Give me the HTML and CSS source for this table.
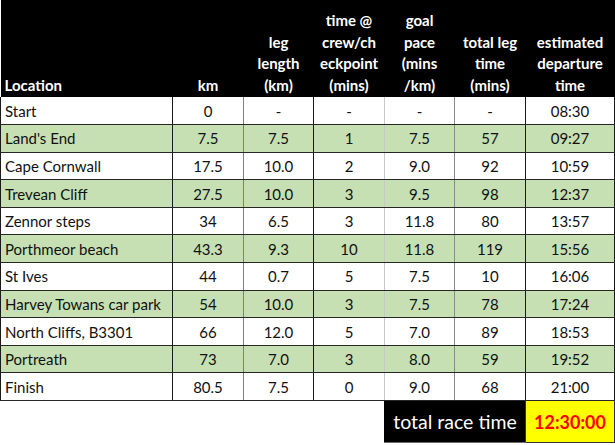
FILE: index.html
```html
<!DOCTYPE html>
<html>
<head>
<meta charset="utf-8">
<link rel="stylesheet" href="styles.css">
</head>
<body>
<table class="sched">
<colgroup>
<col class="w-loc"><col class="w-km"><col class="w-leg"><col class="w-tm"><col class="w-pace"><col class="w-tot"><col class="w-dep">
</colgroup>
<thead>
<tr class="head">
<th class="loc">Location</th>
<th>km</th>
<th>leg<br>length<br>(km)</th>
<th>time @<br>crew/ch<br>eckpoint<br>(mins)</th>
<th>goal<br>pace<br>(mins<br>/km)</th>
<th>total leg<br>time<br>(mins)</th>
<th>estimated<br>departure<br>time</th>
</tr>
</thead>
<tbody>
<tr class="row"><td class="c1">Start</td><td class="c2">0</td><td class="c3">-</td><td class="c4">-</td><td class="c5">-</td><td class="c6">-</td><td class="c7">08:30</td></tr>
<tr class="row g"><td class="c1">Land's End</td><td class="c2">7.5</td><td class="c3">7.5</td><td class="c4">1</td><td class="c5">7.5</td><td class="c6">57</td><td class="c7">09:27</td></tr>
<tr class="row"><td class="c1">Cape Cornwall</td><td class="c2">17.5</td><td class="c3">10.0</td><td class="c4">2</td><td class="c5">9.0</td><td class="c6">92</td><td class="c7">10:59</td></tr>
<tr class="row g"><td class="c1">Trevean Cliff</td><td class="c2">27.5</td><td class="c3">10.0</td><td class="c4">3</td><td class="c5">9.5</td><td class="c6">98</td><td class="c7">12:37</td></tr>
<tr class="row"><td class="c1">Zennor steps</td><td class="c2">34</td><td class="c3">6.5</td><td class="c4">3</td><td class="c5">11.8</td><td class="c6">80</td><td class="c7">13:57</td></tr>
<tr class="row g"><td class="c1">Porthmeor beach</td><td class="c2">43.3</td><td class="c3">9.3</td><td class="c4">10</td><td class="c5">11.8</td><td class="c6">119</td><td class="c7">15:56</td></tr>
<tr class="row"><td class="c1">St Ives</td><td class="c2">44</td><td class="c3">0.7</td><td class="c4">5</td><td class="c5">7.5</td><td class="c6">10</td><td class="c7">16:06</td></tr>
<tr class="row g"><td class="c1">Harvey Towans car park</td><td class="c2">54</td><td class="c3">10.0</td><td class="c4">3</td><td class="c5">7.5</td><td class="c6">78</td><td class="c7">17:24</td></tr>
<tr class="row"><td class="c1">North Cliffs, B3301</td><td class="c2">66</td><td class="c3">12.0</td><td class="c4">5</td><td class="c5">7.0</td><td class="c6">89</td><td class="c7">18:53</td></tr>
<tr class="row g"><td class="c1">Portreath</td><td class="c2">73</td><td class="c3">7.0</td><td class="c4">3</td><td class="c5">8.0</td><td class="c6">59</td><td class="c7">19:52</td></tr>
<tr class="row"><td class="c1">Finish</td><td class="c2">80.5</td><td class="c3">7.5</td><td class="c4">0</td><td class="c5">9.0</td><td class="c6">68</td><td class="c7">21:00</td></tr>
<tr class="foot"><td class="blank" colspan="4"></td><td class="total" colspan="2">total race time</td><td class="race">12:30:00</td></tr>
</tbody>
</table>
</body>
</html>
```

FILE: styles.css
```css
html, body {
  margin: 0;
  padding: 0;
  background: #ffffff;
}

body {
  font-family: Lato, "Liberation Sans", sans-serif;
  font-size: 15px;
  color: #111111;
}

.sched {
  border-collapse: collapse;
  table-layout: fixed;
  width: 614px;
}

.w-loc { width: 172px; }
.w-km { width: 71px; }
.w-leg { width: 70px; }
.w-tm { width: 71px; }
.w-pace { width: 70px; }
.w-tot { width: 71px; }
.w-dep { width: 89px; }

.head {
  height: 97px;
  background: #000000;
}

.head th {
  color: #ffffff;
  font-weight: 700;
  font-size: 15px;
  line-height: 21.5px;
  vertical-align: bottom;
  text-align: center;
  padding: 0 0 1px 0;
  border: none;
}

.head th.loc {
  text-align: left;
  padding-left: 4px;
}

.row {
  height: 27.6px;
  background: #ffffff;
}

.row.g {
  background: #c6e0b4;
}

.row td {
  padding: 0;
  text-align: center;
  vertical-align: middle;
  line-height: 18px;
  border-bottom: 1px solid #262626;
  white-space: nowrap;
}

.row td.c1 {
  text-align: left;
  padding-left: 4px;
  border-left: 1px solid #1a1a1a;
  border-right: 1px solid #1a1a1a;
}

.row td.c2 { border-right: 1px solid #7f7f7f; }
.row td.c3 { border-right: 1px solid #1a1a1a; }
.row td.c4 { border-right: 1px solid #c8c8c8; }
.row td.c5 { border-right: 1px solid #8a8a8a; }
.row td.c6 { border-right: 1px solid #1a1a1a; }
.row td.c7 { border-right: 1px solid #1a1a1a; }

.foot {
  height: 42px;
}

.foot td {
  padding: 0;
  vertical-align: middle;
}

.foot td.blank {
  border: none;
}

.foot td.total {
  background: #000000;
  color: #ffffff;
  font-size: 19.5px;
  text-align: center;
  border-bottom: 1px solid #6a6a6a;
  border-left: 1px solid #000000;
}

.foot td.race {
  background: #ffff00;
  color: #ff0000;
  font-weight: 700;
  font-size: 18px;
  text-align: center;
  border: 1px solid #333333;
}
```
